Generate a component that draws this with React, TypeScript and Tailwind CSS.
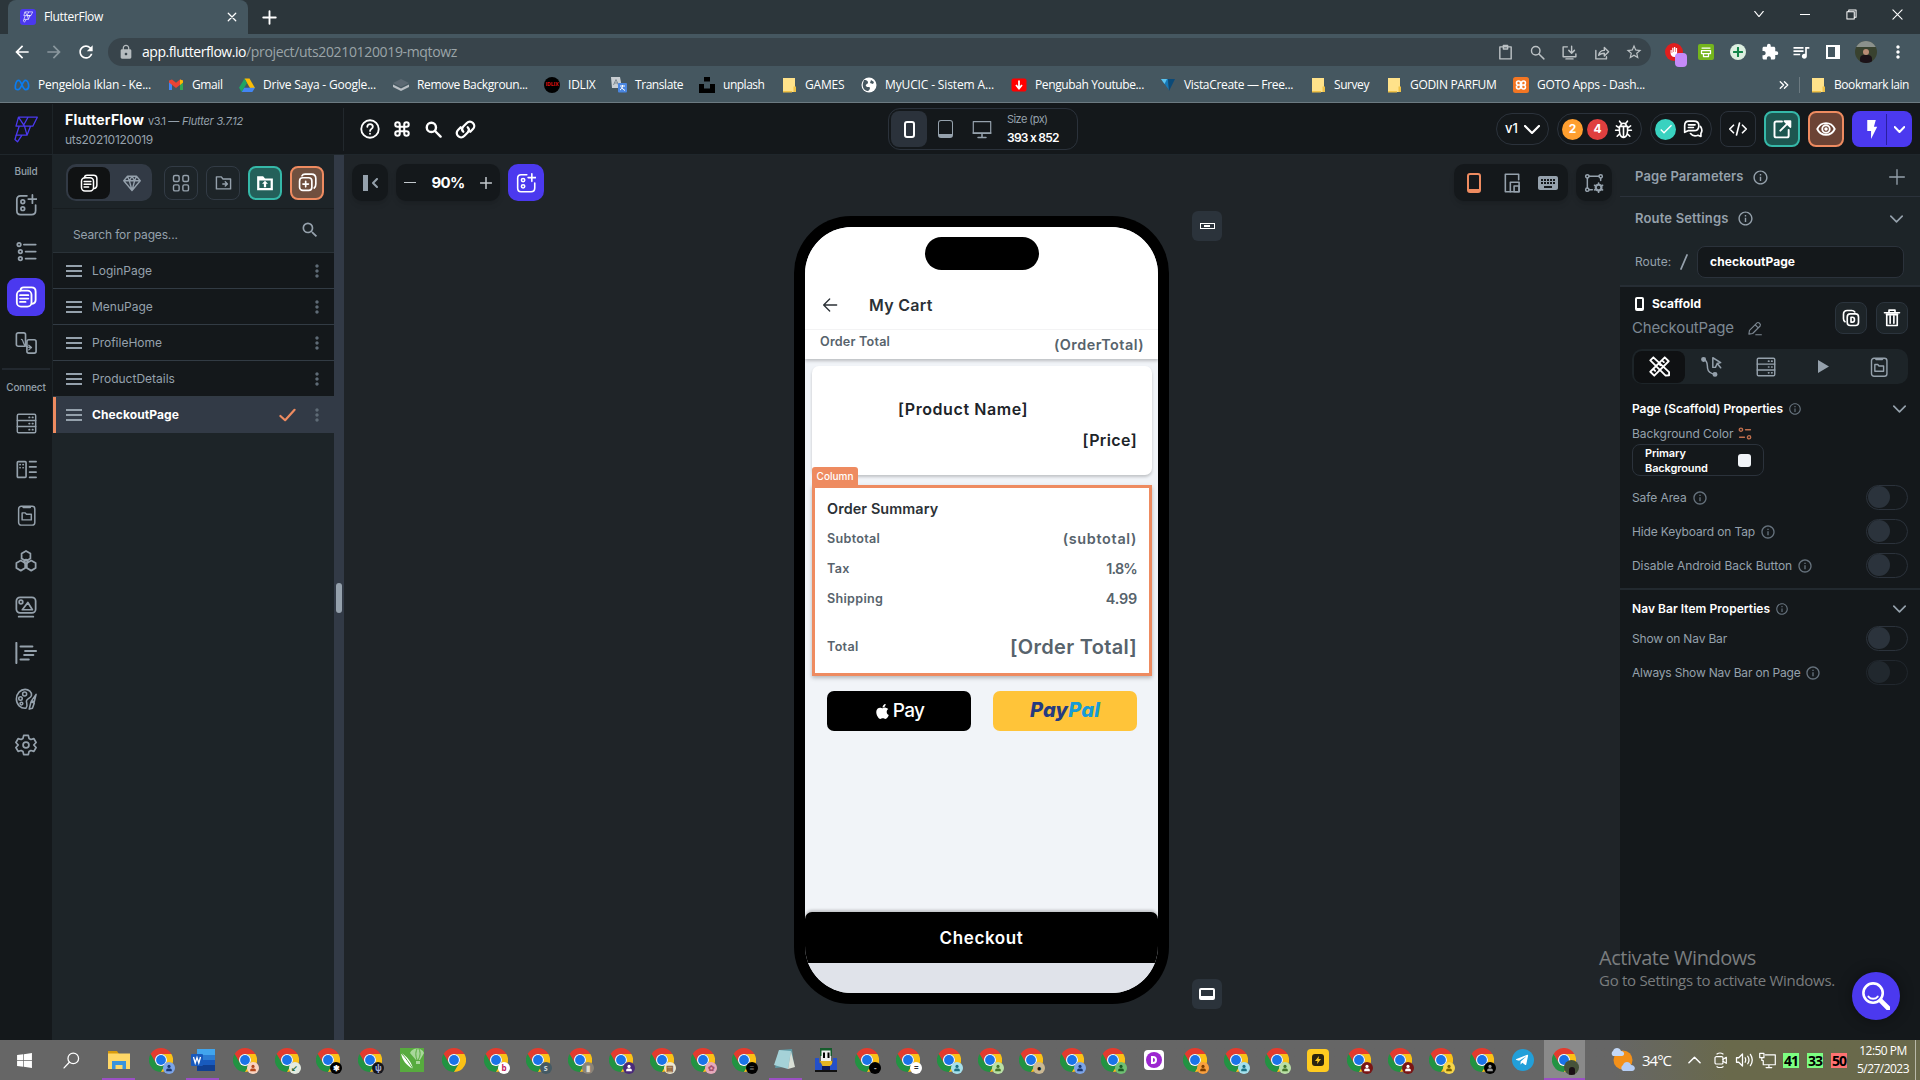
import type { ReactNode } from "react";
import {
  MdArrowBack, MdArrowForward, MdCheck, MdExtension, MdInfoOutline, MdKeyboard, MdLock,
  MdMoreVert, MdRefresh, MdSearch, MdStarBorder, MdQueueMusic,
} from "react-icons/md";
import { FaApple, FaTelegramPlane, FaWindows } from "react-icons/fa";

type IconProps = { className?: string; sw?: number; box?: string; children: ReactNode };

/** Stroked icon on a 24 unit grid. */
function Ico({ className = "size-5", sw = 2, box = "0 0 24 24", children }: IconProps) {
  return (
    <svg viewBox={box} className={`block shrink-0 ${className}`} fill="none" stroke="currentColor" strokeWidth={sw} strokeLinecap="round" strokeLinejoin="round">
      {children}
    </svg>
  );
}

/* ---------- shared glyphs ---------- */

const Pages = ({ className }: { className?: string }) => (
  <Ico className={className} sw={2}>
    <rect x="2" y="5" width="16" height="17.5" rx="4.5" />
    <path d="M6 5c0-2 1-3.500 3.500-3.500H18c3 0 4.500 1.500 4.500 4.500v9c0 2.500-1 4-4 4.500" />
    <path d="M5.500 10h9M5.500 13.700h9M5.500 17.400h6" />
  </Ico>
);
const WidgetAdd = ({ className }: { className?: string }) => (
  <Ico className={className} sw={1.9}>
    <path d="M13 2H6C3.500 2 2 3.500 2 6v12c0 2.500 1.500 4.500 4 4.500h12c2.500 0 4.500-1.500 4.500-4.500v-6M19 1v9M14.500 5.500h9" />
    <circle cx="8.500" cy="8.500" r="2" />
    <circle cx="8.500" cy="16" r="2" />
  </Ico>
);
const Server = ({ className }: { className?: string }) => (
  <Ico className={className} sw={1.7}>
    <rect x="1.500" y="1.500" width="21" height="21" rx="1.5" />
    <path d="M1.500 8.500h21M1.500 15.500h21" />
    <path d="M15 5h.5M18.800 5h.5M15 12h.5M18.800 12h.5M15 19h.5M18.800 19h.5" strokeWidth="2" />
  </Ico>
);
const ClipFolder = ({ className }: { className?: string }) => (
  <Ico className={className} sw={1.7}>
    <rect x="3" y="1.500" width="18.500" height="21.500" rx="3" />
    <path d="M8.500 2.500h7.500" strokeWidth="2.500" />
    <path d="M7 9h3.500l1.500 1.700h5.500V17H7z" />
  </Ico>
);
const Chevron = ({ className = "w-[15px] h-2", sw = 2 }: { className?: string; sw?: number }) => (
  <Ico className={className} sw={sw} box="0 0 16 9"><path d="M1 1l7 7 7-7" /></Ico>
);
const Info = ({ className = "size-[15px]" }: { className?: string }) => <MdInfoOutline className={`shrink-0 ${className}`} />;
const Folder = () => (
  <svg viewBox="0 0 16 16" className="size-4 shrink-0">
    <path d="M2 1h12v14H2z" fill="#ffe28a" />
    <path d="M2 14h9v1.500H2zM12.500 9.500H15V15h-2.500z" fill="#f0c246" />
  </svg>
);
const Person = ({ className = "size-2" }: { className?: string }) => (
  <svg viewBox="0 0 10 10" className={className} fill="currentColor"><circle cx="5" cy="3" r="2" /><path d="M1.500 9V7.500C1.500 6 3 5.600 5 5.600s3.500.4 3.500 1.900V9z" /></svg>
);
const FlowMark = ({ className, color, sw }: { className: string; color: string; sw: number }) => (
  <svg viewBox="0 0 24 27" className={className} fill="none" stroke={color} strokeWidth={sw} strokeLinejoin="round">
    <path d="M4.500 1.200h18.800l-4.500 9H10.500zM4.500 1.200 2 10.200h16.800M13.500 10.200h3l-3.500 9H2.200l3-9M10.500 10.200l2.500 9M8 19.200 3.500 25.800 1 23.500l1.200-4.300M9 10.200 14 1.200" />
  </svg>
);

/* ---------- browser chrome ---------- */

function TabStrip() {
  return (
    <div className="flex h-[34px] bg-[#2c363b] pl-2">
      <div className="flex w-[240px] items-center rounded-t-lg bg-[#455760] pl-3 pr-[11px] text-white">
        <div className="flex size-4 items-center justify-center rounded-[3px] bg-[#4b39ef]"><FlowMark className="h-3 w-2.5" color="#ffffff" sw={1.6} /></div>
        <span className="ml-2 text-[12px] tracking-[-0.32px]">FlutterFlow</span>
        <Ico className="ml-auto size-2.5" sw={3}><path d="M3 3l18 18M21 3 3 21" /></Ico>
      </div>
      <div className="flex flex-1 items-center text-white">
        <Ico className="ml-[14px] size-[15px]" sw={3}><path d="M12 2v20M2 12h20" /></Ico>
        <div className="ml-auto flex items-center pb-1.5">
          <Ico className="mr-[35px] h-1.5 w-3" sw={1.3} box="0 0 12 7"><path d="M1 .5l5 6 5-6" /></Ico>
          <div className="mr-9 h-px w-2.5 bg-white" />
          <Ico className="mr-[35px] size-[11px]" sw={1.1} box="0 0 12 12"><path d="M1 3h8v8H1zM3 3V1h8v8H9" /></Ico>
          <Ico className="mr-[17px] size-[11px]" sw={1.2} box="0 0 12 12"><path d="M1 1l10 10M11 1 1 11" /></Ico>
        </div>
      </div>
    </div>
  );
}

function AddressBar() {
  return (
    <div className="flex h-9 items-center bg-[#455760] text-white">
      <MdArrowBack className="ml-3 size-5" />
      <MdArrowForward className="ml-3 size-5 text-[#8a979d]" />
      <MdRefresh className="ml-3 size-5" />
      <div className="ml-3 flex h-7 w-[1543px] items-center rounded-full bg-[#38444b] pl-2.5 pr-2 text-[14px] text-[#9ba4a8]">
        <MdLock className="size-4 text-[#b6bcbf]" />
        <span className="mb-0.5 ml-2 tracking-[-0.45px] text-white">app.flutterflow.io</span>
        <span className="mb-0.5 tracking-[-0.34px]">/project/uts20210120019-mqtowz</span>
        <div className="ml-auto flex items-center gap-[15px] text-[#bcc2c5]">
          <Ico className="size-[17px]"><path d="M4 4h16v17H4zM9 2h6v5H9z" /></Ico>
          <Ico className="size-[17px]"><circle cx="9.500" cy="9.500" r="6" /><path d="M14 14l7 7" /></Ico>
          <Ico className="size-[17px]"><path d="M9 4H3v14h18v-4M7 21h10M15 3v9M11 9l4 4 4-4" /></Ico>
          <Ico className="size-[17px]"><path d="M4 9v12h15v-3M8 16c1-6 5-7 8-7V5l6 6-6 6v-4c-4 0-6 1-8 3z" /></Ico>
          <MdStarBorder className="size-[18px]" />
        </div>
      </div>
      <div className="ml-3.5 flex items-center">
        <div className="relative flex size-[18px] items-center justify-center rounded-full bg-[#e01e1e]">
          <svg viewBox="0 0 12 12" className="size-3" fill="#fff"><path d="M2.500 4h1.200v3h.5V1.800h1.300V6H6V1h1.300v5h.5V2h1.300v6.500C9.100 10.300 8 11 6.500 11 4 11 2.500 9 2.500 7z" /></svg>
          <div className="absolute left-2.5 top-2.5 h-3.5 w-3 rounded-sm bg-[#c58af9]" />
        </div>
        <div className="ml-[15px] flex size-4 items-center justify-center rounded-[2px] bg-[#74b51c]">
          <Ico className="size-3 text-white" sw={2.5}><path d="M4 4h16M3 9h18v6H3zM7 15v6h10v-6" /></Ico>
        </div>
        <div className="ml-4 flex size-4 items-center justify-center rounded-full bg-[#dcefe0]">
          <Ico className="size-2.5 text-[#12854a]" sw={5}><path d="M12 2v20M2 12h20" /></Ico>
        </div>
        <MdExtension className="ml-[15px] size-[18px]" />
        <MdQueueMusic className="ml-3 size-5" />
        <div className="ml-[15px] h-3.5 w-[14px] border-2 border-r-[5px] border-white" />
        <div className="ml-[15px] size-[22px] overflow-hidden rounded-full bg-[#39422f]">
          <div className="h-1.5 bg-[#8b918c]" />
          <div className="mx-auto mt-0.5 h-1.5 w-1.5 rounded-full bg-[#b98c75]" />
          <div className="mx-auto h-2.5 w-3 rounded-t bg-[#1b1218]" />
        </div>
        <MdMoreVert className="ml-[11px] size-5" />
      </div>
    </div>
  );
}

const bookmarkIcons = {
  meta: <Ico className="size-4 text-[#0a7cf0]" sw={2.6}><path d="M2 16C2 9 4 5 7 5c4 0 6 14 10.500 14C20 19 22 17 22 14c0-5-2-9-5-9-4 0-6 14-11 14-3 0-4-1-4-3z" /></Ico>,
  gmail: (
    <svg viewBox="0 0 16 16" className="size-4"><path d="M1 4v9h3V6z" fill="#4285f4" /><path d="M12 6v7h3V4z" fill="#34a853" /><path d="M1 3.500 4 2.500l4 3.300 4-3.300 3 1v2L8 11 1 5.500z" fill="#ea4335" /><path d="M12 2.500l3 1v2L12 8z" fill="#fbbc04" /></svg>
  ),
  drive: (
    <svg viewBox="0 0 16 16" className="size-4"><path d="M5.500 1.500h5L16 11h-5z" fill="#fbbc04" /><path d="M5.500 1.500 8 6 2.700 15 0 10.700z" fill="#1fa463" /><path d="M5.300 10.700H16L13.300 15H2.700z" fill="#4285f4" /></svg>
  ),
  layers: <svg viewBox="0 0 16 16" className="size-4"><path d="M0 6l8-4 8 4-8 4z" fill="#5b6872" /><path d="M0 7.500l8 4 8-4V10l-8 4-8-4z" fill="#b9bfc4" /></svg>,
  idlix: <div className="flex size-4 items-center justify-center rounded-full bg-black text-[5px] font-bold text-[#e01010]">IDLIX</div>,
  translate: <svg viewBox="0 0 16 16" className="size-4"><path d="M0 0h9l2 11H1z" fill="#c9ced2" /><path d="M2.500 8 5 2.500 7.500 8M3.300 6h3.400" stroke="#7f8a92" fill="none" /><rect x="7" y="6" width="9" height="9.500" rx="1" fill="#4a86e0" /><path d="M9 9h5M11.500 8v1c0 2-1 3-2.500 4M10 10.500l4 3" stroke="#fff" fill="none" /></svg>,
  unsplash: <svg viewBox="0 0 16 16" className="size-4"><path d="M5 0h6v4.500H5zM0 7h5v4.500h6V7h5v9H0z" fill="#000" /></svg>,
  folder: <Folder />,
  globe: <svg viewBox="0 0 16 16" className="size-4"><circle cx="8" cy="8" r="7.500" fill="#fff" /><path d="M3 3c2 0 4 .5 4 2.500S4 7 5 9s4 0 4 2-2 3-2 3c-4 0-6-4-5-8zM10 3l3 2-1 2-3-1z" fill="#455760" /></svg>,
  down: <svg viewBox="0 0 16 16" className="size-4"><rect x=".5" y="1.500" width="15" height="13" rx="2" fill="#f00" /><path d="M8 3.500V11M5 8l3 3.500L11 8" stroke="#fff" strokeWidth="1.800" fill="none" /></svg>,
  vista: <svg viewBox="0 0 16 16" className="size-4"><path d="M1 2h7l1 11z" fill="#1679b8" /><path d="M8 2h7L9 14z" fill="#0b4a78" /><path d="M1 2h6L4.500 7z" fill="#5cc3ee" /></svg>,
  xampp: <svg viewBox="0 0 16 16" className="size-4"><rect width="16" height="16" rx="2.500" fill="#f37623" /><path d="M5.500 8a2 2 0 1 1 2-2v4a2 2 0 1 1-2-2h5a2 2 0 1 0-2-2v4a2 2 0 1 0 2-2" stroke="#fff" strokeWidth="1.600" fill="none" /></svg>,
};

const bookmarks: { icon: keyof typeof bookmarkIcons; label: string; w: string; track: string }[] = [
  { icon: "meta", label: "Pengelola Iklan - Ke...", w: "w-[154px]", track: "tracking-[-0.22px]" },
  { icon: "gmail", label: "Gmail", w: "w-[71px]", track: "tracking-[-0.41px]" },
  { icon: "drive", label: "Drive Saya - Google...", w: "w-[154px]", track: "tracking-[-0.2px]" },
  { icon: "layers", label: "Remove Backgroun...", w: "w-[151px]", track: "tracking-[-0.37px]" },
  { icon: "idlix", label: "IDLIX", w: "w-[67px]", track: "tracking-[-0.22px]" },
  { icon: "translate", label: "Translate", w: "w-[88px]", track: "tracking-[-0.44px]" },
  { icon: "unsplash", label: "unplash", w: "w-[82px]", track: "tracking-[-0.48px]" },
  { icon: "folder", label: "GAMES", w: "w-[80px]", track: "tracking-[-0.17px]" },
  { icon: "globe", label: "MyUCIC - Sistem A...", w: "w-[150px]", track: "tracking-[-0.14px]" },
  { icon: "down", label: "Pengubah Youtube...", w: "w-[149px]", track: "tracking-[-0.38px]" },
  { icon: "vista", label: "VistaCreate — Free...", w: "w-[150px]", track: "tracking-[-0.33px]" },
  { icon: "folder", label: "Survey", w: "w-[76px]", track: "tracking-[-0.43px]" },
  { icon: "folder", label: "GODIN PARFUM", w: "w-[127px]", track: "tracking-[-0.31px]" },
  { icon: "xampp", label: "GOTO Apps - Dash...", w: "w-[140px]", track: "tracking-[-0.27px]" },
];

function BookmarksBar() {
  return (
    <div className="flex h-[33px] items-center border-b border-[#6c7a81] bg-[#455760] pb-[3px] pl-3.5 text-[12px] text-white">
      {bookmarks.map((b) => (
        <div key={b.label} className={`flex shrink-0 items-center gap-2 whitespace-nowrap ${b.w}`}>
          {bookmarkIcons[b.icon]}
          <span className={b.track}>{b.label}</span>
        </div>
      ))}
      <Ico className="ml-auto size-2.5" sw={1.6} box="0 0 12 12"><path d="M1.500 2l4 4-4 4M6.500 2l4 4-4 4" /></Ico>
      <div className="ml-2.5 h-4 w-px bg-[#6c7a81]" />
      <div className="ml-2.5 mr-[11px] flex items-center gap-2"><Folder /><span className="tracking-[-0.44px]">Bookmark lain</span></div>
    </div>
  );
}

/* ---------- FlutterFlow header ---------- */

function AppHeader() {
  return (
    <header className="flex h-[52px] shrink-0 items-center border-b border-[#1f262b] bg-[#14181b] pt-px text-white">
      <div className="flex h-full w-[53px] items-center justify-center border-r border-[#1d2428]"><FlowMark className="h-[27px] w-6" color="#4b39ef" sw={1.3} /></div>
      <div className="flex h-[43px] w-[291px] flex-col justify-center border-r border-[#22282d] pl-3 leading-none">
        <div className="flex items-baseline whitespace-nowrap">
          <span className="text-[14px] font-bold tracking-[0.19px]">FlutterFlow</span>
          <span className="ml-1 w-[34px] text-[11px] tracking-[-0.45px] text-[#95a1ac]">v3.1 —</span>
          <span className="text-[11px] italic tracking-[-0.21px] text-[#95a1ac]">Flutter 3.7.12</span>
        </div>
        <span className="mt-[7px] text-[12px] tracking-[-0.25px] text-[#95a1ac]">uts20210120019</span>
      </div>
      <div className="ml-4 flex items-center">
        <Ico className="size-5" sw={2.2}><circle cx="12" cy="12" r="10.500" /><path d="M8.800 9.300c0-4.200 6.600-4 6.600 0 0 2.500-3.300 2.600-3.300 5M12 17.500v.3" /></Ico>
        <Ico className="ml-[13px] size-[18px]" sw={2.7}><path d="M9 9h6v6H9zM9 9H6a3 3 0 1 1 3-3zM15 9V6a3 3 0 1 1 3 3zM15 15h3a3 3 0 1 1-3 3zM9 15v3a3 3 0 1 1-3-3z" /></Ico>
        <Ico className="ml-[14px] size-[17px]" sw={3.4}><circle cx="9" cy="9" r="6.500" /><path d="M14.500 14.500 22 22" /></Ico>
        <Ico className="ml-[13px] size-[21px]" sw={2.6}><path d="M9.500 14.500c-2-2-2-4 0-6l4-4c2-2 5-2 7 0s2 5 0 7l-3 3M14.500 9.500c2 2 2 4 0 6l-4 4c-2 2-5 2-7 0s-2-5 0-7l3-3" /></Ico>
      </div>
      <div className="ml-[412px] flex h-[42px] w-[190px] items-center rounded-xl border border-[#2b323b] pl-0.5">
        <div className="flex h-9 w-9 items-center justify-center rounded-lg bg-[#2b323b]"><div className="h-[17px] w-[11px] rounded-[3px] border-2 border-white" /></div>
        <div className="ml-[11px] h-[18px] w-[15px] rounded-[3px] border border-b-4 border-[#95a1ac]" />
        <Ico className="ml-[19px] h-[19px] w-5 text-[#95a1ac]" sw={1.5}><path d="M1 2h22v15H1z" /><path d="M1 16.500h22M12 18v4M7 22h10" strokeWidth="2" /></Ico>
        <div className="ml-[15px] flex flex-col gap-[7px] whitespace-nowrap leading-none">
          <span className="text-[11px] tracking-[-0.57px] text-[#95a1ac]">Size (px)</span>
          <span className="text-[12px] font-semibold tracking-[-0.75px] [font-feature-settings:'calt'_0]">393 x 852</span>
        </div>
      </div>
      <div className="ml-auto mr-2 flex items-center gap-2">
        <div className="flex h-8 w-[53px] items-center justify-center gap-1.5 rounded-full border border-[#2b323b]"><span className="text-[13px] font-medium">v1</span><Chevron className="h-[9px] w-4" sw={2.2} /></div>
        <div className="flex h-8 w-[85px] items-center gap-1 rounded-full border border-[#2b323b] pl-1 text-[12px] font-bold">
          <div className="flex size-[21px] items-center justify-center rounded-full bg-[#ff9f2f]">2</div>
          <div className="flex size-[21px] items-center justify-center rounded-full bg-[#df3f3f]">4</div>
          <Ico className="ml-0.5 size-[19px]" sw={2}><path d="M7 8h10c1 9-1 14-5 14S6 17 7 8zM8.500 7.500C8.500 3 15.500 3 15.500 7.500M9 4 7 1.500M15 4l2-2.500M12 9v12M7 13H2M6.500 10 3 7.500M7.500 17 4 20.500M17 13h5M17.500 10 21 7.500M16.500 17l3.500 3.500" /></Ico>
        </div>
        <div className="flex h-8 w-[62px] items-center gap-[7px] rounded-full border border-[#2b323b] pl-1">
          <div className="flex size-[21px] items-center justify-center rounded-full bg-[#39d2c0]"><MdCheck className="size-4" /></div>
          <Ico className="size-5" sw={2}><path d="M2 16V8c0-4 2.500-5.500 5-5.500h6c4 0 6 2 6 5.500s-2 6-6 6H6z" /><path d="M6.500 7h8M6.500 10.200h6M21 9c2 3 2 6 .5 8v4L18 19.500c-4 1.500-7 .5-9-2" /></Ico>
        </div>
        <div className="flex size-9 items-center justify-center rounded-lg border border-[#2b323b]"><Ico className="size-[18px]" sw={2.2}><path d="M6 7l-5 5 5 5M18 7l5 5-5 5M14 4l-4 16" /></Ico></div>
        <div className="flex size-9 items-center justify-center rounded-lg border-2 border-[#35b8a8] bg-[#1d5650]"><Ico className="size-5" sw={2.3}><path d="M12 3H5a2 2 0 0 0-2 2v15a2 2 0 0 0 2 2h13a2 2 0 0 0 2-2v-7M10 14 20 4" /><path d="M15 2.500h7v7z" fill="currentColor" /></Ico></div>
        <div className="flex size-9 items-center justify-center rounded-lg border-2 border-[#ee8b60] bg-[#6b4335]"><Ico className="size-5" sw={2.2}><path d="M1.500 12C6 2.500 18 2.500 22.500 12 18 21.500 6 21.500 1.500 12z" /><circle cx="12" cy="12" r="4.500" /><circle cx="12" cy="12" r="1" /></Ico></div>
        <div className="flex h-9 w-[60px] items-center rounded-lg bg-[#4b39ef]">
          <svg viewBox="0 0 12 20" className="ml-3.5 h-[19px] w-3" fill="#fff"><path d="M1 0h9L8 7h3.500L5 20V11.500H1z" /></svg>
          <div className="ml-2 h-[31px] w-px bg-[#2a1fa0]" />
          <Chevron className="ml-[7px] h-[7px] w-[11px]" sw={3} />
        </div>
      </div>
    </header>
  );
}

/* ---------- left rail ---------- */

function Rail() {
  const cell = "flex h-[46px] w-full items-center justify-center";
  return (
    <nav className="flex w-[53px] shrink-0 flex-col items-center border-r border-[#1d2428] bg-[#14181b] text-[#95a1ac]">
      <div className="mt-[9px] flex h-[15px] items-center text-[10px] font-medium tracking-[-0.16px]">Build</div>
      <div className={`mt-[3px] ${cell}`}><WidgetAdd className="size-[22px]" /></div>
      <div className={cell}>
        <Ico className="size-[21px]"><circle cx="3.500" cy="4" r="2" /><circle cx="5" cy="12" r="2" /><circle cx="5" cy="20" r="2" /><path d="M9 4h13.500M11 12h11.500M11 20h11.500" /></Ico>
      </div>
      <div className={cell}><div className="flex size-[38px] items-center justify-center rounded-[9px] bg-[#4b39ef] text-white"><Pages className="size-[22px]" /></div></div>
      <div className={cell}>
        <Ico className="size-[22px]" sw={1.8}><rect x="1.500" y="1" width="10" height="14.500" rx="2" /><rect x="13" y="8.500" width="10" height="14.500" rx="2" /><path d="M7 8c1 0 1.500 1 2 3 1 4 3 6 9 6M15 14.500l3 2.500-3 2.500" strokeWidth="1.400" /></Ico>
      </div>
      <div className="mt-[2px] h-0.5 w-12 bg-[#22282f]" />
      <div className="mt-2.5 flex h-[15px] items-center text-[10px] font-medium tracking-[-0.14px]">Connect</div>
      <div className={`mt-[5px] ${cell}`}><Server className="size-[21px]" /></div>
      <div className={cell}>
        <Ico className="size-[21px]" sw={1.9}><rect x="1.500" y="3" width="10" height="18" rx="1" /><path d="M4.500 6.500h.3M8 6.500h.3M4.500 10h.3M8 10h.3M15.500 3H23M15.500 9H23M15.500 15H23M15.500 21H23" /></Ico>
      </div>
      <div className={cell}><ClipFolder className="size-[21px]" /></div>
      <div className={cell}>
        <Ico className="size-[22px]" sw={1.9}><path d="M12 1l4.800 2.800v5.400L12 12 7.200 9.200V3.800z" /><path d="M6.300 11.500l4.800 2.800v5.400l-4.800 2.800-4.800-2.800v-5.400zM17.700 11.500l4.800 2.800v5.400l-4.800 2.800-4.800-2.800v-5.400z" /><circle cx="12" cy="12.500" r="2" /></Ico>
      </div>
      <div className={cell}>
        <Ico className="size-[22px]" sw={1.9}><rect x="1.500" y="1.500" width="21" height="17" rx="4" /><path d="M4 22.500h16M8 15l6-8 5 8z" /><circle cx="6.500" cy="6.500" r="2" /></Ico>
      </div>
      <div className={cell}><Ico className="size-[22px]" sw={2.2}><path d="M1.500 1v22M6 5h13M11 9.700h12M10 14.300h10M6 19h9" /></Ico></div>
      <div className={cell}>
        <Ico className="size-[22px]" sw={1.7}><path d="M12 22C6 22.500 1.500 18 1.500 12S6 1.500 11 1.500c4 0 7.500 3 7 6.500-.5 3-5 3.500-5.500 6-.4 2.500 2 4-.5 8z" /><circle cx="10.500" cy="6.500" r="2.200" /><circle cx="6" cy="11.500" r="1.900" /><circle cx="7" cy="17" r="1.500" /><path d="M23 7l-2 8-3-1zM17.500 15l3.500 1.500-2 5.500-3.500 1z" /></Ico>
      </div>
      <div className={cell}>
        <Ico className="size-[22px]" sw={1.9}><path d="M9.500 1.500h5l.8 3.300 2 1.200 3.300-1 2.400 4.300L20.500 12l2.500 2.700-2.400 4.300-3.300-1-2 1.200-.8 3.300h-5l-.8-3.300-2-1.200-3.300 1L1 14.700 3.500 12 1 9.300 3.400 5l3.300 1 2-1.200z" /><circle cx="12" cy="12" r="3.200" /></Ico>
      </div>
    </nav>
  );
}

/* ---------- pages panel ---------- */

const pages = ["LoginPage", "MenuPage", "ProfileHome", "ProductDetails"];

const DragLines = () => (
  <div className="flex w-4 shrink-0 flex-col gap-[3px]">
    <div className="h-0.5 bg-[#95a1ac]" /><div className="h-0.5 bg-[#95a1ac]" /><div className="h-0.5 bg-[#95a1ac]" />
  </div>
);

function PagesPanel() {
  const tool = "flex h-[34px] w-[34px] items-center justify-center rounded-lg";
  return (
    <aside className="w-[281px] shrink-0 bg-[#1d2428] text-[#95a1ac]">
      <div className="flex h-[54px] items-center gap-2 border-b border-[#171c1f] pl-[13px] pt-[2px]">
        <div className="mr-1 flex h-[37px] w-[86px] items-center rounded-[10px] bg-[#323a45] pl-0.5">
          <div className="flex h-8 w-[42px] items-center justify-center rounded-lg bg-[#101213] text-white"><Pages className="size-[18px]" /></div>
          <Ico className="ml-[13px] size-[18px]" sw={1.8}><path d="M6 3h12l5 6-11 13L1 9zM1 9h22M6 3l2.500 6L12 22l3.500-13L18 3M12 3 8.500 9M12 3l3.500 6" /></Ico>
        </div>
        <div className={`${tool} border border-[#323b45]`}><Ico className="size-[18px]" sw={1.9}><rect x="2" y="2" width="7.500" height="8" rx="2" /><rect x="14.500" y="2" width="7.500" height="8" rx="2" /><rect x="2" y="14.500" width="7.500" height="8" rx="2" /><rect x="14.500" y="14.500" width="7.500" height="8" rx="2" /></Ico></div>
        <div className={`${tool} border border-[#323b45]`}><Ico className="size-[17px]" sw={2}><path d="M2 4h7l2 3h11v14H2zM11 14h6M14.500 11l3 3-3 3" /></Ico></div>
        <div className={`${tool} border-2 border-[#35b8a8] bg-[#24605a] text-white`}>
          <svg viewBox="0 0 24 24" className="size-[18px]" fill="currentColor" fillRule="evenodd"><path d="M1.500 3h8l2.500 3h10.500v15.500h-21zM4.500 8.500v10h15v-10zM12 9l4 4h-2.500v4.500h-3V13H8z" /></svg>
        </div>
        <div className={`${tool} border-2 border-[#ee8b60] bg-[#70503f] text-white`}>
          <Ico className="size-[19px]" sw={2.1}><rect x="2" y="6" width="15.500" height="16" rx="4" /><path d="M5 3.500C6 1.500 7 1.500 9 1.500h8c4 0 5.500 1.500 5.500 5.500v7c0 3-.5 4-2 5M9.700 10.500v7M6.200 14h7" /></Ico>
        </div>
      </div>
      <div className="flex h-11 items-center justify-between border-b border-[#2a3238] pl-[19px] pr-3">
        <span className="ml-px mt-[9px] text-[12px] tracking-[-0.15px]">Search for pages...</span>
        <MdSearch className="mb-0.5 mr-0.5 size-5" />
      </div>
      {pages.map((p) => (
        <div key={p} className="flex h-9 items-center border-b border-[#323b44] bg-[#14181b] pl-[13px] pr-[7px] text-[12px]">
          <DragLines /><span className="ml-2.5">{p}</span><MdMoreVert className="ml-auto size-5 text-[#5f6b76]" />
        </div>
      ))}
      <div className="flex h-9 items-center border-l-[3px] border-[#ee8b60] bg-[#323a46] pl-2.5 pr-[7px] text-[12px]">
        <DragLines /><span className="ml-2.5 font-bold tracking-[0.1px] text-white">CheckoutPage</span>
        <Ico className="ml-auto mr-[11px] h-3.5 w-[17px] text-[#ee8b60]" sw={2.3} box="0 0 18 14"><path d="M1.500 8l5 4.500L16.500 1.500" /></Ico>
        <MdMoreVert className="size-5 text-[#5f6b76]" />
      </div>
    </aside>
  );
}

/* ---------- phone preview ---------- */

function SummaryRow({ label, value, track }: { label: string; value: string; track: string }) {
  return (
    <div className="flex h-[30px] items-center justify-between">
      <span className="text-[12.6px] tracking-[0.3px]">{label}</span>
      <span className={`text-[14.4px] ${track}`}>{value}</span>
    </div>
  );
}

function Phone() {
  return (
    <div className="h-[788px] w-[375px] shrink-0 rounded-[57px] bg-black p-[11px]">
      <div className="flex h-full flex-col overflow-hidden rounded-[47px] bg-[#f1f4f8] font-semibold text-[#57636c]">
        <div className="relative z-10 bg-white shadow-[0_2px_3px_rgba(0,0,0,0.22)]">
          <div className="mx-auto h-[43px] w-[114px] pt-2.5"><div className="h-[33px] rounded-full bg-black" /></div>
          <div className="flex h-[60px] items-center border-b border-[#f3f3f4] pl-[17px] pt-2.5 text-[#2b3136]">
            <Ico className="size-4" sw={2}><path d="M22 12H3M11.500 3 2.500 12l9 9" /></Ico>
            <span className="ml-[31px] text-[16px] tracking-[0.3px]">My Cart</span>
          </div>
          <div className="flex h-[29px] items-start justify-between pl-[15px] pr-3.5">
            <span className="mt-[3px] text-[12.6px] tracking-[0.2px]">Order Total</span>
            <span className="mt-1 text-[14.4px] tracking-[0.5px]">(OrderTotal)</span>
          </div>
        </div>
        <div className="ml-[7px] mr-1.5 mt-[7px] flex h-[109px] flex-col rounded-[7px] bg-white pt-[31px] text-[16px] leading-6 text-[#1d2429] shadow-[0_2px_3px_rgba(0,0,0,0.2)]">
          <span className="self-start pl-[86px] tracking-[0.58px]">[Product Name]</span>
          <span className="mt-[7px] self-end pr-[15px] tracking-[0.38px]">[Price]</span>
        </div>
        <div className="relative ml-[7px] mr-1.5 mt-2.5 h-[191px] border-[3px] border-[#ee8b60] bg-white px-3 pt-1.5 shadow-[0_2px_4px_rgba(0,0,0,0.25)]">
          <div className="absolute -left-[3px] -top-[21px] flex h-[19px] w-[46px] items-center justify-center rounded-t-[3px] bg-[#ee8b60] text-[10px] font-medium text-white">Column</div>
          <div className="flex h-[30px] items-center text-[14.4px] tracking-[0.1px] text-[#2b3136]">Order Summary</div>
          <SummaryRow label="Subtotal" value="(subtotal)" track="tracking-[0.68px]" />
          <SummaryRow label="Tax" value="1.8%" track="tracking-[-0.8px]" />
          <SummaryRow label="Shipping" value="4.99" track="tracking-[-0.2px]" />
          <div className="mt-[18px] flex h-[30px] items-center justify-between">
            <span className="text-[12.6px] tracking-[0.3px]">Total</span>
            <span className="text-[20px] tracking-[0.3px]">[Order Total]</span>
          </div>
        </div>
        <div className="ml-[22px] mr-[21px] mt-[15px] flex justify-between">
          <div className="flex h-10 w-36 items-center justify-center rounded-[7px] bg-black text-[19px] font-medium text-white"><FaApple className="mr-0.5 size-[17px]" /><span className="tracking-[-0.7px]">Pay</span></div>
          <div className="flex h-10 w-36 items-center justify-center rounded-[7px] bg-[#ffc439] pb-0.5 text-[20px] font-extrabold italic tracking-[0.2px] text-[#253b80]">Pay<span className="text-[#179bd7]">Pal</span></div>
        </div>
        <div className="mt-auto flex h-[51px] items-center justify-center rounded-t-[7px] bg-black pt-0.5 text-[17px] font-semibold tracking-[0.63px] text-white shadow-[0_-2px_3px_rgba(0,0,0,0.2)]">Checkout</div>
        <div className="h-[30px] bg-[#e0e3ea]" />
      </div>
    </div>
  );
}

function Canvas() {
  const btn = "flex h-[37px] items-center rounded-[10px] bg-[#14181b] shadow-md";
  const side = "flex size-[30px] items-center justify-center rounded-md bg-[#2b333b] text-white";
  return (
    <main className="flex min-w-0 flex-1 flex-col bg-[#1f2428] text-[#95a1ac]">
      <div className="flex items-center gap-2 px-2 pt-[9px]">
        <div className={`${btn} w-9 justify-center`}><div className="h-4 w-[5px] bg-[#95a1ac]" /><Ico className="ml-1 h-2.5 w-1.5" sw={2} box="0 0 6 10"><path d="M5 1 1 5l4 4" /></Ico></div>
        <div className={`${btn} w-[104px] justify-between px-2`}>
          <div className="h-[1.5px] w-3 bg-[#c3c9ce]" />
          <span className="pt-px text-[15px] font-bold tracking-[-0.7px] text-white">90%</span>
          <Ico className="size-3 text-[#c3c9ce]" sw={1.5} box="0 0 12 12"><path d="M6 .5v11M.5 6h11" /></Ico>
        </div>
        <div className="flex h-[37px] w-9 items-center justify-center rounded-[10px] bg-[#4b39ef] text-white"><WidgetAdd className="size-5" /></div>
        <div className={`${btn} ml-auto w-[114px]`}>
          <div className="ml-[13px] h-5 w-3.5 rounded-[3px] border-2 border-b-4 border-[#ee8b60]" />
          <Ico className="ml-[21px] size-5" sw={1.9}><path d="M10 22.500H4V1.500h16V8" /><path d="M10 22.500V11H20.500v11.500z" /><path d="M14.500 15.500h6v7h-6z" /></Ico>
          <MdKeyboard className="ml-[14px] size-6" />
        </div>
        <div className={`${btn} w-9 justify-center`}>
          <Ico className="size-5" sw={1.8}><circle cx="4" cy="4" r="2" /><circle cx="20" cy="4" r="2" /><circle cx="4" cy="20" r="2" /><path d="M6 4h12M4 6v12M20 6v3M6 20h4" /><circle cx="17.500" cy="17.500" r="3" strokeWidth="3.500" /><path d="M17.500 12v11M12.700 14.700l9.600 5.600M12.700 20.300l9.600-5.600" strokeWidth="2" /><circle cx="17.500" cy="17.500" r="1.200" className="stroke-[#14181b]" /></Ico>
        </div>
      </div>
      <div className="mt-[10px] flex pl-[450px] pt-[5px]">
        <Phone />
        <div className="-mt-[5px] ml-[23px] flex flex-col justify-between">
          <div className={side}><div className="flex h-[6px] w-[15px] items-center justify-center border-[1.5px] border-white"><div className="h-0.5 w-1.5 bg-white" /></div></div>
          <div className={`${side} -mb-[5px]`}><div className="h-3 w-4 rounded-[2px] border-2 border-b-4 border-white" /></div>
        </div>
      </div>
    </main>
  );
}

/* ---------- properties panel ---------- */

function Toggle({ dim = false }: { dim?: boolean }) {
  return (
    <div className={`ml-auto flex h-[25px] w-[42px] items-center rounded-full border border-[#2b323b] pl-px ${dim ? "opacity-60" : ""}`}>
      <div className="size-[22px] rounded-full bg-[#2b333c]" />
    </div>
  );
}

function PropRow({ label, track, info = true, dim = false }: { label: string; track: string; info?: boolean; dim?: boolean }) {
  return (
    <div className="flex h-[34px] items-center">
      <span className={`pt-0.5 text-[12px] ${track}`}>{label}</span>
      {info && <Info className="ml-[5px] mt-0.5 size-4 text-[#66727d]" />}
      <Toggle dim={dim} />
    </div>
  );
}

function SectionTitle({ label, track }: { label: string; track: string }) {
  return (
    <div className="flex h-6 items-center">
      <span className={`text-[12px] font-semibold text-white ${track}`}>{label}</span>
      <Info className="ml-[5px] size-3.5 text-[#66727d]" />
      <Chevron className="ml-auto mr-0.5 h-2 w-[13px]" />
    </div>
  );
}

function Properties() {
  const square = "flex size-8 items-center justify-center rounded-lg border border-[#2b343d] bg-[#1d2428] text-white";
  const tab = "flex h-8 flex-1 items-center justify-center";
  return (
    <aside className="w-[300px] shrink-0 bg-[#14181b] text-[#95a1ac]">
      <div className="border-b-2 border-[#262d34] bg-[#1d2428] pb-[7px] pl-[15px] pr-4">
        <div className="-ml-[15px] -mr-4 flex h-[42px] items-center border-b border-[#2b323b] pl-[15px] pr-[15px] pt-[3px]">
          <span className="text-[13px] font-semibold tracking-[0.11px]">Page Parameters</span>
          <Info className="ml-2 size-[17px]" />
          <Ico className="ml-auto size-4" sw={2}><path d="M12 1v22M1 12h22" /></Ico>
        </div>
        <div className="flex h-[43px] items-center">
          <span className="text-[13px] font-semibold tracking-[0.17px]">Route Settings</span>
          <Info className="ml-2 size-[17px]" />
          <Chevron className="ml-auto mr-px h-2 w-[13px]" />
        </div>
        <div className="mt-1.5 flex items-center">
          <span className="text-[12px]">Route:</span>
          <Ico className="ml-[9px] h-4 w-2" sw={1.8} box="0 0 8 16"><path d="M7 1 1 15" /></Ico>
          <div className="ml-[9px] flex h-8 w-52 items-center rounded-lg border border-[#2b323b] bg-[#14181b] pl-3 text-[12px] font-bold tracking-[0.08px] text-white">checkoutPage</div>
        </div>
      </div>
      <div className="px-3">
        <div className="flex h-[62px] items-center">
          <div className="flex flex-col pb-0.5">
            <div className="flex items-center pl-[3px] text-[12px] font-bold text-white"><div className="mr-2 h-[14px] w-[9px] rounded-[2px] border-2 border-b-[3px] border-white" />Scaffold</div>
            <div className="mt-1 flex items-center text-[15px] tracking-[-0.15px] text-[#7d8893]">
              CheckoutPage
              <Ico className="ml-[13px] size-[15px]" sw={1.8}><path d="M3 21l1-6L16 3c2-2 7 2 5 5L9 20zM13 6l5 5M14 22h9" /></Ico>
            </div>
          </div>
          <div className="ml-auto flex gap-[9px]">
            <div className={square}><Ico className="size-[18px]" sw={2.2}><rect x="7" y="6.500" width="15" height="15.500" rx="4" /><path d="M4 17c-1.500-1-2-2-2-4V7c0-3.500 1.500-5 5-5h6c2 0 3 .5 4 2M12 11v6.500h2c3.500 0 3.500-6.500 0-6.500z" /></Ico></div>
            <div className={square}><Ico className="size-[18px]" sw={2.2}><path d="M2 5h20M8 4V1.500h8V4M5 8v14h14V8M9.500 9v10M14.500 9v10" /><path d="M5 7h14" strokeWidth="3" /></Ico></div>
          </div>
        </div>
        <div className="flex h-[35px] items-center rounded-[10px] bg-[#1d2428] px-0.5">
          <div className={`${tab} max-w-[51px] rounded-lg bg-[#0f1113] text-white`}>
            <Ico className="size-[21px]" sw={2.1}><path d="M5 1.500 1.500 5 19 22.500l4-.5v-3.500zM18 1.500 22.500 6 6 22.500 1.500 18zM8 11.500l2 2M11 8.500l2 2M5 15l2 2M15 5l2 2" /></Ico>
          </div>
          <div className={tab}><Ico className="size-[21px]" sw={1.7}><circle cx="3" cy="4" r="2" fill="currentColor" /><circle cx="16" cy="21" r="2" fill="currentColor" /><path d="M3 4c5 1 4 6 4.500 10s3 6 8.500 7M13.500 2l9 5.500-4 1-2 4.500h-3zM18.500 8.500l4 5" /></Ico></div>
          <div className={tab}><Server className="size-5" /></div>
          <div className={`${tab} pl-1`}><svg viewBox="0 0 12 14" className="h-[13px] w-[11px]" fill="currentColor"><path d="M0 0l12 7-12 7z" /></svg></div>
          <div className={`${tab} pl-0.5`}><ClipFolder className="size-5" /></div>
        </div>
        <div className="mt-[13px]"><SectionTitle label="Page (Scaffold) Properties" track="tracking-[-0.07px]" /></div>
        <div className="mt-0.5 flex h-[21px] items-center text-[12px] tracking-[-0.04px]">
          Background Color
          <Ico className="ml-[5px] h-[13px] w-[14px] text-[#c06f4d]" sw={2.6}><circle cx="4.500" cy="5" r="3" /><circle cx="19.500" cy="19" r="3" /><path d="M13 5h9M2 19h9" /></Ico>
        </div>
        <div className="flex h-8 w-[132px] items-center justify-between overflow-hidden rounded-lg border border-[#2b323b] pl-3 pr-3 pt-0.5 text-[11px] font-semibold leading-[15px] tracking-[-0.12px] text-white">
          <span>Primary<br />Background</span>
          <div className="mb-px size-[13px] rounded-[3px] bg-[#f1f4f8]" />
        </div>
        <div className="mt-1">
          <PropRow label="Safe Area" track="tracking-[-0.09px]" />
          <PropRow label="Hide Keyboard on Tap" track="tracking-[-0.14px]" />
          <PropRow label="Disable Android Back Button" track="tracking-[-0.04px]" />
        </div>
      </div>
      <div className="mt-1.5 h-0.5 bg-[#22292f]" />
      <div className="px-3 pt-[7px]">
        <SectionTitle label="Nav Bar Item Properties" track="tracking-[0.04px]" />
        <PropRow label="Show on Nav Bar" track="tracking-[-0.16px]" info={false} />
        <PropRow label="Always Show Nav Bar on Page" track="tracking-[-0.19px]" dim />
      </div>
    </aside>
  );
}

/* ---------- taskbar ---------- */

const ChromeMark = ({ badge }: { badge?: ReactNode }) => (
  <div className="relative size-6">
    <svg viewBox="0 0 48 48" className="size-6">
      <path d="M24 12H44.800A24 24 0 0 0 3.200 12L13.600 30A12 12 0 0 1 24 12Z" fill="#e33b2e" />
      <path d="M13.600 30 3.200 12A24 24 0 0 0 24 48L34.400 30A12 12 0 0 1 13.600 30Z" fill="#229342" />
      <path d="M34.400 30 24 48A24 24 0 0 0 44.800 12H24A12 12 0 0 1 34.400 30Z" fill="#fbc116" />
      <circle cx="24" cy="24" r="12" fill="#fff" /><circle cx="24" cy="24" r="9.800" fill="#1a73e8" />
    </svg>
    {badge}
  </div>
);
const Badge = ({ tone, children }: { tone: string; children?: ReactNode }) => (
  <div className={`absolute -bottom-0.5 -right-0.5 flex size-3 items-center justify-center overflow-hidden rounded-full text-[8px] font-bold leading-none ${tone}`}>{children}</div>
);
const user = (tone: string) => <ChromeMark badge={<Badge tone={tone}><Person /></Badge>} />;
const mark = (tone: string, text: string) => <ChromeMark badge={<Badge tone={tone}>{text}</Badge>} />;

const tasks: { icon: ReactNode; open?: boolean; active?: boolean }[] = [
  { open: true, icon: <svg viewBox="0 0 22 20" className="h-5 w-[22px]"><path d="M0 1h9l2 3H0z" fill="#d99b0c" /><path d="M0 3.500h22V19H0z" fill="#ffd767" /><path d="M4 11h14v8h-3.500v-4h-7v4H4z" fill="#3a93dd" /></svg> },
  { icon: user("bg-[#7ca4e8] text-[#1b3a75]") },
  { open: true, icon: <svg viewBox="0 0 24 22" className="h-[22px] w-6"><rect x="6" width="18" height="22" rx="1" fill="#2b7cd3" /><path d="M6 0h18v6H6z" fill="#41a5ee" /><path d="M6 11h18v6H6z" fill="#185abd" /><path d="M6 16h18v6H6z" fill="#103f91" /><rect y="5" width="12" height="12" rx="1" fill="#185abd" /><path d="M2.500 8l1.700 6L6 8.500 7.800 14l1.700-6" stroke="#fff" strokeWidth="1.300" fill="none" /></svg> },
  { icon: user("bg-[#f9d3c0] text-[#b5481c]") },
  { icon: mark("bg-[#e3ebe0] text-[#2f7040]", "↙") },
  { icon: mark("bg-black text-white", "✱") },
  { icon: mark("bg-[#16161d] text-[#a9b7e0]", "ψ") },
  { icon: <svg viewBox="0 0 24 24" className="size-6"><path d="M0 0h24v24H0z" fill="#57ab3e" /><path d="M10 5c2-6 12-6 14 0l-4 7h-4z" fill="#a9d79b" /><path d="M17 1c-2 4-1 8 0 11M19 1c2 4 1 8-1 11" stroke="#57ab3e" fill="none" /><path d="M16 13h4v3h-4z" fill="#a9d79b" /><path d="M1 5c6 3 11 10 12 16C6 17 2 12 1 5z" fill="#fff" /><path d="M1 5c5 5 8 10 12 16" stroke="#57ab3e" fill="none" /></svg> },
  { icon: <ChromeMark /> },
  { icon: mark("bg-white text-[#c2185b]", "b") },
  { icon: mark("bg-[#455a64] text-[#c9d5da]", "s") },
  { icon: mark("bg-[#8b8478] text-[#e0dccf]", "▮") },
  { icon: user("bg-[#4a2a7a] text-white") },
  { icon: mark("bg-[#efe6cf] text-[#8b5a2b]", "▤") },
  { icon: mark("bg-[#e7a9bb] text-[#a4506b]", "✿") },
  { icon: mark("bg-black text-[#888]", "≡") },
  { open: true, icon: <svg viewBox="0 0 24 22" className="h-[22px] w-6"><path d="M6 1l13-1 2 17-19 2z" fill="#5d9aa6" /><path d="M6 1l12 1-3 18-14-4z" fill="#a5d2d8" /><path d="M18 2l4 16-7 2z" fill="#d9dfd6" /></svg> },
  { icon: <svg viewBox="0 0 24 24" className="size-6"><path d="M7 1h10v13H7z" fill="#eee" /><path d="M6 0h12v2.500H6zM6 2h1.500v6H6zM16.500 2H18v6h-1.500z" fill="#155c2b" /><path d="M9 4.500h2V10H9zM13.500 4.500h2V10h-2z" fill="#000" /><path d="M1 10h4v5l14 0v-5h4v12H1z" fill="#2450c9" /><path d="M6 13h12v3l-3 3H9z" fill="#e6b422" /><path d="M8 18h8v5H8z" fill="#111a5c" /><path d="M1 22h22v2H1z" fill="#111" /></svg> },
  { icon: mark("bg-black text-[#aaa]", "-") },
  { icon: mark("bg-white text-[#333]", "=") },
  { icon: user("bg-[#a5e0ec] text-[#1d7384]") },
  { icon: user("bg-[#b9e0a5] text-[#44762c]") },
  { icon: mark("bg-[#cbb892] text-[#1a1a1a]", "●") },
  { icon: user("bg-[#7ca4e8] text-[#1b3a75]") },
  { icon: user("bg-[#6fbf73] text-[#1d5a26]") },
  { icon: <div className="flex size-5 items-center justify-center rounded-[4px] bg-white"><div className="flex size-4 items-center justify-center rounded-full bg-[#9c27d0]"><div className="h-2 w-1.5 rounded-r-full border-2 border-white" /></div></div> },
  { icon: user("bg-[#f9a03f] text-[#7a3d00]") },
  { icon: user("bg-[#a5e0ec] text-[#1d7384]") },
  { icon: user("bg-[#b9e0a5] text-[#44762c]") },
  { icon: <div className="flex h-[23px] w-[22px] items-center justify-center rounded-[4px] bg-[#ffcb1f]"><div className="flex size-3 items-center justify-center rounded-[3px] bg-[#2b2410] text-[#ffcb1f]"><svg viewBox="0 0 8 8" className="size-2" fill="currentColor"><path d="M5 0 1 5h2.500L3 8l4-5H4.500z" /></svg></div></div> },
  { icon: user("bg-[#7a1515] text-white") },
  { icon: user("bg-[#7a1515] text-white") },
  { icon: user("bg-[#f7d64a] text-[#7a6200]") },
  { icon: user("bg-black text-[#999]") },
  { icon: <div className="flex size-[22px] items-center justify-center rounded-full bg-[#229fd9] text-white"><FaTelegramPlane className="mr-0.5 size-3.5" /></div> },
  { open: true, active: true, icon: <ChromeMark badge={<div className="absolute -bottom-[3px] -right-[3px] flex size-[15px] items-end justify-center overflow-hidden rounded-full bg-[#46523a]"><div className="h-2 w-1.5 rounded-t-full bg-[#1a1016]" /></div>} /> },
];

const temps = [
  { v: "41", tone: "bg-[#7cff82]" },
  { v: "33", tone: "bg-[#7cff82]" },
  { v: "50", tone: "bg-[#ff7272]" },
];

function Taskbar() {
  return (
    <footer className="flex h-10 shrink-0 items-stretch bg-[#666666] bg-linear-to-r from-[#666666] from-84% to-[#69694b] to-90% text-white">
      <div className="flex w-12 items-center justify-center"><FaWindows className="size-[17px]" /></div>
      <div className="flex w-[50px] items-center justify-center pr-1"><Ico className="size-[17px]" sw={1.8}><circle cx="14.500" cy="9" r="7.500" /><path d="M9 14.500 1.500 22.500" /></Ico></div>
      {tasks.map((t, i) => (
        <div key={i} className={`flex shrink-0 flex-col items-center ${i < 12 ? "w-[41.9px]" : "w-[41px]"} ${t.active ? "bg-[#8a8a8a]" : ""}`}>
          <div className="flex flex-1 items-center">{t.icon}</div>
          <div className={`-mt-0.5 h-0.5 ${t.active ? "w-full" : "w-[33px]"} ${t.open ? "bg-[#9b4fc4]" : ""}`} />
        </div>
      ))}
      <div className="ml-auto flex items-center">
        <svg viewBox="0 0 26 28" className="h-7 w-[26px]"><circle cx="13" cy="14" r="9.500" fill="#f39019" /><path d="M3 10a3 3 0 0 1 0-5c1-4 7-4 8 0 4 0 4 5 1 5z" fill="#c3d8f8" /><path d="M13 25a3.500 3.500 0 0 1 0-6c1-4 7-4 8 0 5 0 5 6 1 6z" fill="#b5cdf4" /></svg>
        <span className="ml-1.5 w-[46px] text-[15px] tracking-[-1px]">34°C</span>
        <Ico className="h-2 w-[13px]" sw={1.6} box="0 0 14 8"><path d="M1 7l6-6 6 6" /></Ico>
        <Ico className="ml-3 size-4" sw={1.8}><rect x="3" y="7" width="12" height="11" rx="2" /><path d="M15 11l5-3v9l-5-3M6 3c3-2 6-2 9 0M6 22c3 2 6 2 9 0" /></Ico>
        <Ico className="ml-1.5 size-[18px]" sw={1.7}><path d="M2 9h3l5-5v16l-5-5H2zM13.500 9c1 2 1 4 0 6M17 7c2 3 2 7 0 10M20.500 4.500c3 4.500 3 10.500 0 15" /></Ico>
        <Ico className="ml-1.5 size-[17px]" sw={1.7}><path d="M9 4h14v14H6v-6M14 18v4M10 22h8M1 2h6v6H1zM4 8v4h2" /></Ico>
        <div className="ml-[7px] flex gap-2">
          {temps.map((t) => (
            <div key={t.v} className={`flex h-[15px] w-4 items-center justify-center text-[14px] font-bold tracking-[-1px] text-black ${t.tone}`}>{t.v}</div>
          ))}
        </div>
        <div className="ml-2.5 mr-1.5 flex w-[52px] flex-col items-center whitespace-nowrap text-[12px] leading-[18px] tracking-[-0.53px]"><span>12:50 PM</span><span>5/27/2023</span></div>
        <div className="mr-[4px] h-full w-px bg-[#b8b8a8]" />
      </div>
    </footer>
  );
}

export default function App() {
  return (
    <div className="relative flex h-[1080px] w-[1920px] flex-col overflow-hidden bg-[#14181b] font-['Open_Sans',sans-serif]">
      <TabStrip />
      <AddressBar />
      <BookmarksBar />
      <div className="flex min-h-0 flex-1 flex-col font-['Inter',sans-serif]">
        <AppHeader />
        <div className="flex min-h-0 flex-1">
          <Rail />
          <PagesPanel />
          <div className="flex w-2.5 shrink-0 justify-center bg-[#323a46] pt-[428px]"><div className="h-[30px] w-1.5 rounded-full bg-[#95a1ac]" /></div>
          <Canvas />
          <Properties />
        </div>
      </div>
      <Taskbar />
      <div className="absolute left-[1599px] top-[944px] whitespace-nowrap text-[#7a7d7f]">
        <div className="text-[20px] leading-7 tracking-[-0.45px]">Activate Windows</div>
        <div className="text-[15px] leading-[17px] tracking-[-0.28px]">Go to Settings to activate Windows.</div>
      </div>
      <div className="absolute left-[1852px] top-[972px] flex size-12 items-center justify-center rounded-full bg-[#4b39ef] text-white shadow-[0_0_14px_rgba(0,0,0,0.4)]">
        <Ico className="size-7" sw={2.2}><circle cx="9.500" cy="9.500" r="8.300" /><path d="M5.500 12.500c2 2.500 6 2.500 8 0" strokeWidth="1.600" /><path d="M16 16l6.500 6.500" strokeWidth="4" /></Ico>
      </div>
    </div>
  );
}
